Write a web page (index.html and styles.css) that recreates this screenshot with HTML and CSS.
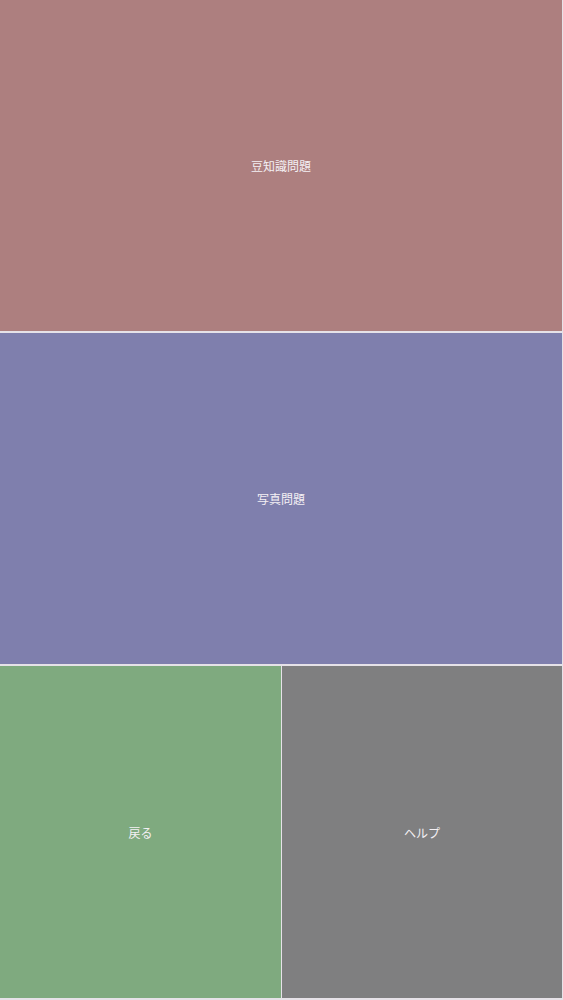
FILE: index.html
```html
<!DOCTYPE html>
<html lang="ja">
<head>
<meta charset="utf-8">
<link rel="stylesheet" href="styles.css">
</head>
<body>
<div class="menu">
  <div class="tile tile-trivia wide">豆知識問題</div>
  <div class="tile tile-photo wide">写真問題</div>
  <div class="tile tile-back">戻る</div>
  <div class="tile tile-help">ヘルプ</div>
</div>
</body>
</html>
```
FILE: styles.css
```css
html, body {
  margin: 0;
  padding: 0;
}
body {
  width: 563px;
  height: 1000px;
  background: #e6e2e8;
  font-family: "Noto Sans CJK JP", "Noto Sans", sans-serif;
}
.menu {
  display: grid;
  grid-template-columns: 281px 1fr;
  grid-template-rows: 331px 331px 332px;
  gap: 2px 1px;
  height: 998px;
  width: 562px;
}
.tile {
  display: flex;
  align-items: center;
  justify-content: center;
  color: #f4f0f4;
  font-size: 12px;
}
.wide {
  grid-column: 1 / 3;
}
.tile-trivia { background: #ad7f7f; }
.tile-photo { background: #7f7fad; }
.tile-back { background: #7faa7f; }
.tile-help { background: #7f7f80; }
```
